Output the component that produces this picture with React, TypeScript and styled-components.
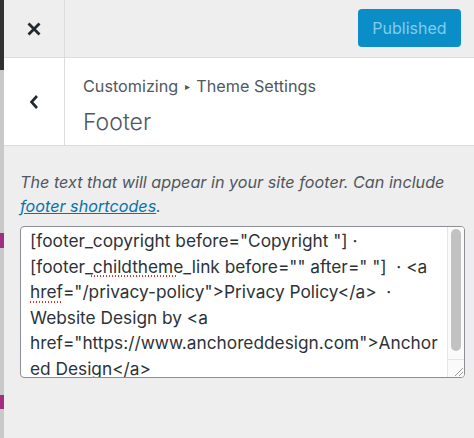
import React from 'react'
import styled, { createGlobalStyle } from 'styled-components';

const GlobalStyle = createGlobalStyle`
  html, body {
    margin: 0;
    padding: 0;
    background: #eeeeee;
  }
  body {
    font-family: Inter, "Noto Sans", sans-serif;
  }
`;

const footerText = '[footer_copyright before="Copyright "] · [footer_childtheme_link before="" after=" "]  · <a href="/privacy-policy">Privacy Policy</a>  · Website Design by <a href="https://www.anchoreddesign.com">Anchored Design</a>';

const App: React.FC = () => {
  return (
    <>
      <GlobalStyle />
      <Screen>
        <EdgeStrip>
          <EdgeBlock tone="#2f3133" size={70} />
          <EdgeBlock tone="#c9c9c9" size={163} />
          <EdgeBlock tone="#a0307f" size={15} />
          <EdgeBlock tone="#c9c9c9" size={147} />
          <EdgeBlock tone="#a0307f" size={14} />
          <EdgeBlock tone="#c9c9c9" size={29} />
        </EdgeStrip>
        <Panel>
          <Header>
            <IconCell>
              <svg width="16" height="16" viewBox="0 0 16 16">
                <path d="M2.5 2.5 L13.5 13.5 M13.5 2.5 L2.5 13.5" stroke="#23282d" strokeWidth="2.8" strokeLinecap="butt" />
              </svg>
            </IconCell>
            <HeaderSpacer />
            <PublishButton disabled>Published</PublishButton>
          </Header>
          <TitleBar>
            <IconCell>
              <svg width="12" height="16" viewBox="0 0 12 16">
                <path d="M9 2 L3.5 8 L9 14" stroke="#23282d" strokeWidth="2.6" fill="none" />
              </svg>
            </IconCell>
            <TitleText>
              <Breadcrumb>Customizing <Arrow>▸</Arrow> Theme Settings</Breadcrumb>
              <SectionTitle>Footer</SectionTitle>
            </TitleText>
          </TitleBar>
          <Body>
            <Description>
              The text that will appear in your site footer. Can include{' '}
              <DescLink href="#shortcodes">footer shortcodes</DescLink>.
            </Description>
            <FieldWrap>
              <FooterField defaultValue={footerText} spellCheck={false} />
              <ScrollTrack>
                <ScrollThumb />
              </ScrollTrack>
              <ResizeCorner>
                <svg width="12" height="12" viewBox="0 0 12 12">
                  <path d="M11 3 L3 11 M11 7 L7 11" stroke="#9a9a9a" strokeWidth="1" />
                </svg>
              </ResizeCorner>
              <SpellMark style={{ left: 70, top: 49, width: 87 }} />
              <SpellMark style={{ left: 9, top: 75, width: 32 }} />
            </FieldWrap>
          </Body>
        </Panel>
      </Screen>
    </>
  );
}

const Screen = styled.div`
  display: flex;
  width: 474px;
  height: 438px;
  overflow: hidden;
`;

const EdgeStrip = styled.div`
  display: flex;
  flex-direction: column;
  width: 4px;
  flex-shrink: 0;
`;

const EdgeBlock = styled.div<{ tone: string; size: number }>`
  height: ${p => p.size}px;
  background: ${p => p.tone};
`;

const Panel = styled.div`
  flex: 1;
  display: flex;
  flex-direction: column;
  background: #eeeeee;
  min-width: 0;
`;

const Header = styled.div`
  display: flex;
  align-items: center;
  height: 57px;
  border-bottom: 1px solid #dcdcde;
  padding-right: 13px;
`;

const IconCell = styled.div`
  width: 60px;
  align-self: stretch;
  display: flex;
  align-items: center;
  justify-content: center;
  border-right: 1px solid #dcdcde;
`;

const HeaderSpacer = styled.div`
  flex: 1;
`;

const PublishButton = styled.button`
  height: 38px;
  width: 103px;
  margin-top: -1px;
  border: none;
  border-radius: 4px;
  background: #0b8ec7;
  color: #7fcdee;
  font-family: Inter, "Noto Sans", sans-serif;
  font-size: 16px;
  padding: 0;
`;

const TitleBar = styled.div`
  display: flex;
  height: 87px;
  background: #ffffff;
  border-bottom: 1px solid #dcdcde;
`;

const TitleText = styled.div`
  display: flex;
  flex-direction: column;
  padding-left: 18px;
  padding-top: 18px;
`;

const Breadcrumb = styled.div`
  font-size: 16.2px;
  color: #50575e;
  line-height: 20px;
`;

const Arrow = styled.span`
  font-size: 10px;
  position: relative;
  top: -2px;
  padding: 0 2px;
`;

const SectionTitle = styled.div`
  font-size: 23px;
  font-weight: 300;
  color: #50575e;
  line-height: 34px;
  margin-top: 7px;
`;

const Body = styled.div`
  display: flex;
  flex-direction: column;
  padding: 24px 9px 0 16px;
`;

const Description = styled.p`
  margin: 0 0 8px;
  font-style: italic;
  font-size: 16.2px;
  line-height: 24px;
  color: #50575e;
`;

const DescLink = styled.a`
  color: #0a73a8;
  text-decoration: underline;
`;

const FieldWrap = styled.div`
  position: relative;
  width: 445px;
  height: 152px;
`;

const FooterField = styled.textarea`
  box-sizing: border-box;
  display: block;
  width: 100%;
  height: 100%;
  margin: 0;
  padding: 1px 26px 0 9px;
  border: 1px solid #8c8f94;
  border-radius: 4px;
  background: #ffffff;
  color: #2c3338;
  font-family: Inter, "Noto Sans", sans-serif;
  font-size: 17.3px;
  line-height: 25.5px;
  resize: none;
  overflow: hidden;
`;

const ScrollTrack = styled.div`
  position: absolute;
  top: 1px;
  right: 1px;
  bottom: 19px;
  width: 17px;
  box-sizing: border-box;
  padding: 2px 3px;
  background: #fafafa;
  border-left: 1px solid #e6e6e6;
  border-top-right-radius: 3px;
  display: flex;
`;

const ScrollThumb = styled.div`
  width: 100%;
  height: 122px;
  background: #c2c2c2;
  border-radius: 6px;
`;

const ResizeCorner = styled.div`
  position: absolute;
  right: 1px;
  bottom: 1px;
  width: 17px;
  height: 18px;
  box-sizing: border-box;
  background: #fafafa;
  border-left: 1px solid #e6e6e6;
  border-top: 1px solid #e6e6e6;
  border-bottom-right-radius: 3px;
  display: flex;
  align-items: flex-end;
  justify-content: flex-end;
`;

const SpellMark = styled.span`
  position: absolute;
  height: 2px;
  background-image: radial-gradient(circle, #e03030 0.9px, transparent 1.1px);
  background-size: 3px 2px;
  pointer-events: none;
`;

export default App;
